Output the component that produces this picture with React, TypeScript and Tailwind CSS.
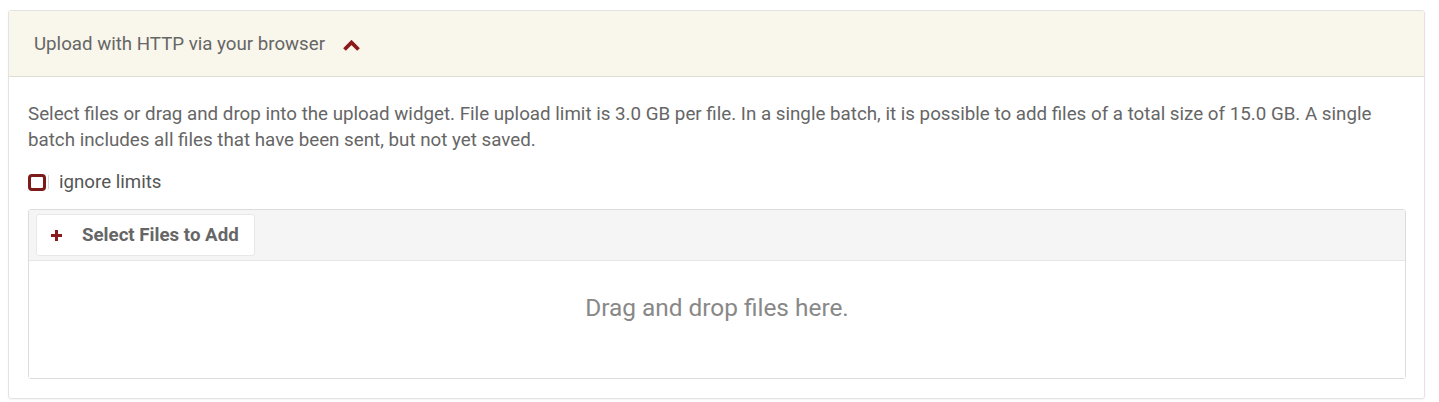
import React from "react";

export default function App() {
  return (
    <div className="bg-white w-[1439px] h-[402px] pt-[10px] px-[8px] font-['Roboto',sans-serif] text-[#666]">
      <div className="w-[1417px] h-[389px] border border-[#e3e3e3] rounded-[3px] shadow-[0_1px_2px_rgba(0,0,0,0.05)] overflow-hidden">
        <div className="h-[66px] bg-[#f9f6ec] border-b border-[#e0ddd3] flex items-center pl-[25px] pt-[1px]">
          <span className="text-[18.7px] text-[#666]">Upload with HTTP via your browser</span>
          <svg className="ml-[17px] mt-[2px]" width="19" height="11" viewBox="0 0 19 11">
            <path d="M2.5 9.5 L9.5 2.5 L16.5 9.5" fill="none" stroke="#8b1a1a" strokeWidth="3.8" strokeLinejoin="miter" />
          </svg>
        </div>
        <div className="px-[19px] pt-[24px]">
          <p className="text-[18.75px] leading-[26px] text-[#666]">
            Select files or drag and drop into the upload widget. File upload limit is 3.0 GB per file. In a single batch, it is possible to add files of a total size of 15.0 GB. A single batch includes all files that have been sent, but not yet saved.
          </p>
          <div className="flex items-center mt-[20px] h-[18px]">
            <span className="w-[18px] h-[17px] border-[3px] border-[#7d1b1b] rounded-[4px] bg-white" />
            <span className="w-px h-[14px] bg-[#d8d8d8] ml-[2px]" />
            <span className="ml-[10px] text-[18.7px] text-[#555]">ignore limits</span>
          </div>
          <div className="mt-[18px] w-[1378px] h-[170px] border border-[#dcdcdc] rounded-[3px] flex flex-col">
            <div className="h-[51px] bg-[#f5f5f5] border-b border-[#e6e6e6] flex items-center pl-[7px]">
              <div className="h-[42px] w-[219px] bg-white border border-[#e8e8e8] rounded-[3px] flex items-center pl-[14px]">
                <svg width="11" height="11" viewBox="0 0 11 11">
                  <path d="M4 0h3v4h4v3H7v4H4V7H0V4h4z" fill="#8b1a1a" />
                </svg>
                <span className="ml-[20px] text-[18.7px] font-bold text-[#666]">Select Files to Add</span>
              </div>
            </div>
            <div className="flex-1 bg-white flex items-center justify-center">
              <span className="text-[24.4px] text-[#888] mb-[22px]">Drag and drop files here.</span>
            </div>
          </div>
        </div>
      </div>
    </div>
  );
}
